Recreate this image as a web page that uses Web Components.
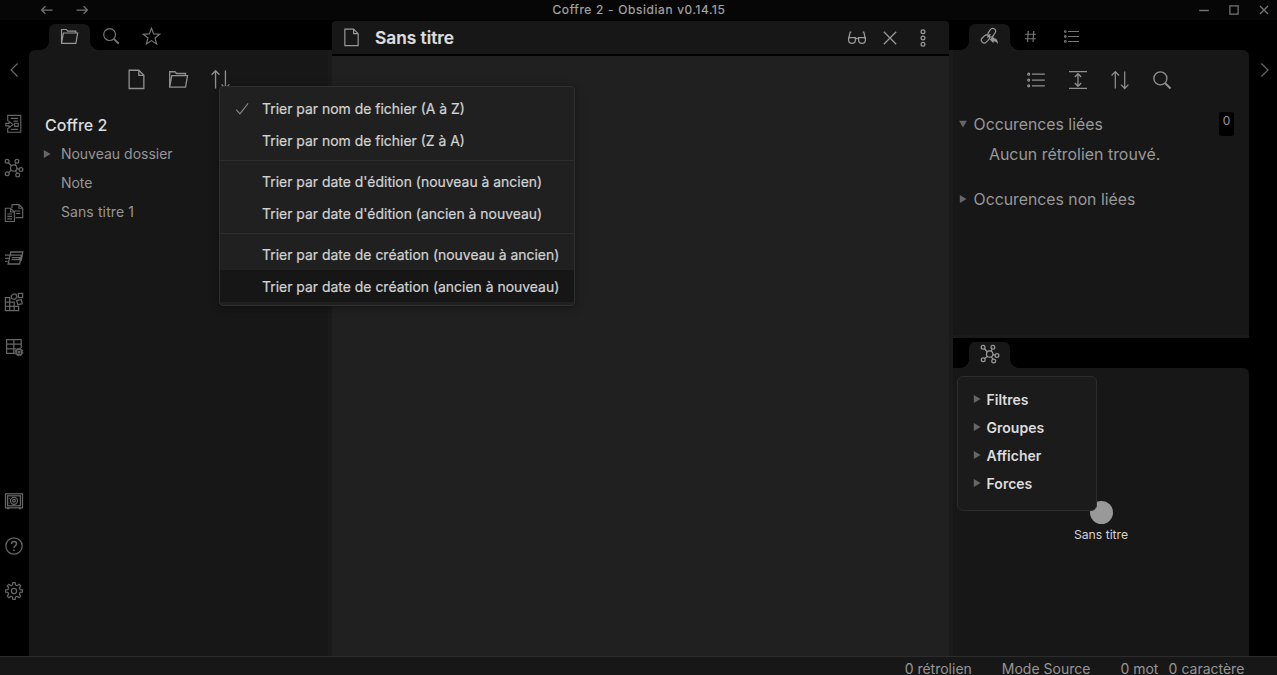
<!DOCTYPE html>
<html lang="fr">
<head>
<meta charset="utf-8">
<title>Coffre 2 - Obsidian v0.14.15</title>
<style>
html,body{margin:0;height:100%;background:#000;overflow:hidden}
body{font-family:Inter,"Liberation Sans",sans-serif;color:#dcddde}
</style>
</head>
<body>
<ob-app></ob-app>
<script>
const star = 'M10 1.3L12.3 7.3L18.6 7.6L13.7 11.6L15.4 17.8L10 14.3L4.6 17.8L6.3 11.6L1.4 7.6L7.7 7.3Z';
const gear = (cx, cy, r, R, n) => {
  const p = [];
  for (let i = 0; i < n; i++) {
    const a = i * 2 * Math.PI / n - Math.PI / 2, w = Math.PI / n;
    for (const [d, q] of [[-.62, r], [-.36, R], [.36, R], [.62, r]])
      p.push((cx + q * Math.cos(a + d * w)).toFixed(2) + ' ' + (cy + q * Math.sin(a + d * w)).toFixed(2));
  }
  return 'M' + p.join('L') + 'Z';
};
const ICONS = {
  back: '<path d="M15.5 10H5M8.4 6.2L4.6 10L8.4 13.8"/>',
  forward: '<path d="M4.5 10H15M11.6 6.2L15.4 10L11.6 13.8"/>',
  folder: '<path d="M1.6 17.3V2.6H6.6L8.1 4.3H16.6V6.2M1.6 17.3L3.6 6.3H18.6L16.7 17.3Z"/>',
  search: '<circle cx="8" cy="8" r="6.2"/><path d="M12.5 12.5L17.6 17.6" stroke-width="2"/>',
  star: `<path d="${star}"/>`,
  left: '<path d="M13.6 3.5L7 10L13.6 16.5"/>',
  right: '<path d="M6.4 3.5L13 10L6.4 16.5"/>',
  file: '<path d="M3 1.2H12.2L17 6V18.6H3ZM12.2 1.2V6H17"/>',
  sort: '<path d="M5.3 18.5V1.8M1.6 5.5L5.3 1.6L9 5.5M14.7 1.5V18.2M11 14.6L14.7 18.5L18.4 14.6"/>',
  glasses: '<path d="M4.3 4.2H3.2L1.5 11M15.7 4.2H16.8L18.5 11M8.6 10.8Q10 9.8 11.4 10.8"/><path d="M1.6 9.7H8.4V12A3.4 3.4 0 0 1 1.6 12ZM11.6 9.7H18.4V12A3.4 3.4 0 0 1 11.6 12Z"/>',
  close: '<path d="M3.8 3.8L16.2 16.2M16.2 3.8L3.8 16.2"/>',
  dots: '<circle cx="10" cy="3.7" r="1.9"/><circle cx="10" cy="10" r="1.9"/><circle cx="10" cy="16.3" r="1.9"/>',
  min: '<path d="M5.2 10.5H14.8" stroke-width="1.4"/>',
  max: '<rect x="5.9" y="5.9" width="8.2" height="8.2"/>',
  wclose: '<path d="M6 6L14 14M14 6L6 14"/>',
  links: '<rect x="-3" y="-4.8" width="6" height="9.6" rx="3" transform="translate(12.4 6) rotate(32)"/><rect x="-3" y="-4.6" width="6" height="9.2" rx="3" transform="translate(5.6 12.6) rotate(45)"/><path d="M7.6 11L11 7.6"/><path d="M10.2 13.2L14.2 9.4V11.6Q19.2 12 18.8 18.2Q17.4 15 14.2 15V17Z" fill="currentColor" stroke="none"/>',
  hash: '<path d="M7.6 4.2L6.9 15.8M13.4 4.2L12.7 15.8M4.4 7.6H15.8M4.2 12.4H15.6"/>',
  list: '<path d="M6 4.2H18.8M6 10H18.8M6 15.8H18.8"/><circle cx="2.7" cy="4.2" r="1"/><circle cx="2.7" cy="10" r="1"/><circle cx="2.7" cy="15.8" r="1"/>',
  expand: '<path d="M1 1.6H19M1 18.4H19M10 4V16M6.8 7L10 3.7L13.2 7M6.8 13L10 16.3L13.2 13"/>',
  check: '<path d="M2.6 11.4L7 16.3L16.6 4"/>',
  graph: '<circle cx="9.7" cy="10" r="3.2"/><circle cx="3.1" cy="3.3" r="1.9"/><circle cx="12.9" cy="3.2" r="1.9"/><circle cx="17" cy="11.5" r="1.9"/><circle cx="3.2" cy="15.8" r="1.9"/><circle cx="13.7" cy="17" r="1.9"/><path d="M4.4 4.7L7.4 7.7M12.1 5L11 7M15.1 11.1L12.9 10.7M4.7 14.5L7.4 12.3M12.9 15.3L11.4 12.7"/>',
  switcher: '<path d="M3.7 7V1.3H16.8V18.2H3.7V14M7 4.4H14M9.5 7.1H14M7 15.3H14M1.8 9.3H5V7.4L9 10.6L5 13.8V11.9H1.8ZM10.7 9.2H14.2V12.4H10.7Z" stroke-width="1.15"/>',
  template: '<path d="M8 5V1.6H15L18.7 5.2V14.6H11.5M15 1.6V5.2H18.7M1.3 5.2H6.6L10.4 9V18.5H1.3ZM6.6 5.2V9H10.4M3.3 11H8M3.3 13.4H8M3.3 15.8H8M10.5 8H16.3M12 10.5H16.3" stroke-width="1.15"/>',
  cards: '<path d="M4.2 16L6 7.2H17.4L15.6 16Z M6.2 6.8L6.8 4H18.8L17.2 13M7.8 9.6H15.6L15.2 11.6H7.6M1 7.2H5.3M1 10.3H4.5M1 13.4H3.6" stroke-width="1.3"/>',
  blocks: '<path d="M1.4 5.7H5.7V18.6H14.6V14.3H1.4ZM1.4 5.7V18.6H5.7M1.4 10H10.2V18.6"/><path d="M9.5 2.2H12L13 5L10.8 7.4L7.4 6.6L7.4 3.5Z" /><rect x="14.4" y="1.4" width="4.2" height="4.2"/><path d="M12.7 8.4L17.4 7.7L18.2 11.8L13.8 12.7Z"/>',
  table: '<path d="M11 16.4H2.6V2.6H17.2V11M2.6 7.2H17.2M2.6 11.8H12M9.8 2.6V16.4"/><circle cx="15" cy="15" r="3" stroke-width="1.5"/><circle cx="15" cy="15" r="3.9" stroke-dasharray="1.5 1.56" stroke-width="1"/><circle cx="15" cy="15" r="1"/>',
  vault: '<rect x="1.5" y="2.8" width="17" height="14"/><rect x="3.6" y="4.8" width="12.8" height="10"/><circle cx="10" cy="9.8" r="3.5"/><circle cx="10" cy="9.8" r="1.4"/><path d="M3 17.6H5.2M14.8 17.6H17M5.3 7V7.8M5.3 11.8V12.6"/>',
  help: '<circle cx="10" cy="10" r="8.2"/><path d="M7.5 8Q7.5 5.4 10 5.4T12.5 7.8Q12.5 9.1 11.2 9.9Q10 10.7 10 12" stroke-width="1.5"/><path d="M10 13.4V15" stroke-width="1.6"/>',
  gear: `<path d="${gear(10, 10, 6.2, 8.5, 8)}" stroke-linejoin="round"/><circle cx="10" cy="10" r="2.6"/>`
};

const define = (name, css, html) => {
  const t = document.createElement('template');
  t.innerHTML = `<style>*{box-sizing:border-box}${css}</style>${html}`;
  customElements.define(name, class extends HTMLElement {
    constructor() { super(); this.attachShadow({mode: 'open'}).append(t.content.cloneNode(true)); }
  });
};

customElements.define('ob-icon', class extends HTMLElement {
  connectedCallback() {
    if (this.shadowRoot) return;
    const s = this.getAttribute('size') || 20;
    this.attachShadow({mode: 'open'}).innerHTML =
      `<style>:host{display:block;flex:none;width:${s}px;height:${s}px}svg{display:block}</style>
       <svg width="${s}" height="${s}" viewBox="0 0 20 20" fill="none" stroke="currentColor" stroke-width="1.25">${ICONS[this.getAttribute('name')]}</svg>`;
  }
});

define('ob-caret', `:host{display:block;flex:none;width:8px;height:8px;color:#666}
  svg{display:block}:host([open]) svg{transform:rotate(90deg)}`,
  `<svg width="8" height="8" viewBox="0 0 8 8"><path d="M.8 0L7.6 4L.8 8Z" fill="currentColor"/></svg>`);

define('ob-titlebar', `:host{display:grid;grid-template-columns:1fr auto 1fr;align-items:center;height:20px;background:#060606;color:#a5a5a5;font-size:12px;line-height:20px}
  .nav{display:flex;gap:15px;padding-left:36.5px;color:#737373;margin-top:-1px}.win{display:flex;gap:10px;justify-content:flex-end;padding-right:3px;color:#777;margin-top:-1px}
  .t{letter-spacing:.64px;-webkit-text-stroke:.2px;padding-left:1px}`,
  `<div class="nav"><ob-icon name="back"></ob-icon><ob-icon name="forward"></ob-icon></div><div class="t">Coffre 2 - Obsidian v0.14.15</div>
   <div class="win"><ob-icon name="min"></ob-icon><ob-icon name="max"></ob-icon><ob-icon name="wclose"></ob-icon></div>`);

define('ob-ribbon', `:host{display:flex;flex-direction:column;align-items:center;background:#000;color:#666}
  .col{display:flex;flex-direction:column;gap:24.7px;align-items:center}
  .tog{padding-top:40px;height:93.5px}.grow{flex:1}.end{padding-bottom:55.5px}`,
  `<div class="tog"><slot name="toggle"></slot></div><div class="col"><slot></slot></div><div class="grow"></div><div class="col end"><slot name="end"></slot></div>`);

define('ob-tabs', `:host{display:flex;background:#000;height:30px;padding:4px 0 0 20px;color:#777}`, `<slot></slot>`);
define('ob-tab', `:host{display:flex;justify-content:center;width:41px;height:26px;padding-top:3px;position:relative}
  :host([active]){background:#171717;border-radius:6px 6px 0 0;color:#999}
  :host([active])::before,:host([active])::after{content:"";position:absolute;bottom:0;width:9px;height:9px}
  :host([active])::before{left:-9px;background:radial-gradient(circle at 0 0,#000 8.6px,#171717 9.2px)}
  :host([active])::after{right:-9px;background:radial-gradient(circle at 100% 0,#000 8.6px,#171717 9.2px)}`, `<slot></slot>`);

define('ob-actions', `:host{display:flex;justify-content:center;gap:21px;color:#909090}`, `<slot></slot>`);

define('ob-tree-row', `:host{display:flex;align-items:center;height:29px;padding-left:13.7px;font-size:14px;line-height:29px;color:#969696}
  .c{width:18.2px;flex:none}`, `<div class="c"><slot name="caret"></slot></div><span><slot></slot></span>`);

define('ob-left', `:host{display:flex;flex-direction:column;background:#000}
  .panel{flex:1;background:#171717;border-radius:6px 0 0 0;border-right:4px solid #1a1a1a;padding-top:19px}
  h1{margin:25px 0 0 16px;font-size:16px;font-weight:500;line-height:20px;height:24px;color:#dcddde}`,
  `<ob-tabs><ob-tab active><ob-icon name="folder" size="19"></ob-icon></ob-tab><ob-tab><ob-icon name="search" size="19" style="margin-left:1px"></ob-icon></ob-tab><ob-tab><ob-icon name="star" size="19"></ob-icon></ob-tab></ob-tabs>
  <div class="panel"><ob-actions><ob-icon name="file" size="21"></ob-icon><ob-icon name="folder" size="21"></ob-icon><ob-icon name="sort" size="21"></ob-icon></ob-actions>
  <h1>Coffre 2</h1>
  <ob-tree-row><ob-caret slot="caret"></ob-caret>Nouveau dossier</ob-tree-row><ob-tree-row>Note</ob-tree-row><ob-tree-row style="letter-spacing:.12px">Sans titre 1</ob-tree-row></div>`);

define('ob-editor', `:host{display:flex;flex-direction:column;background:#000;padding-top:1px}
  header{display:flex;align-items:center;height:33px;background:#171717;border-radius:4px 4px 0 0;padding:0 16px 0 10px;color:#999}
  h2{margin:0 0 0 14px;flex:1;font-size:17.3px;font-weight:600;-webkit-text-stroke:.2px;line-height:33px;color:#dcddde}
  .a{display:flex;gap:13px}.body{flex:1;margin-top:2px;background:#202020}`,
  `<header><ob-icon name="file" size="19"></ob-icon><h2>Sans titre</h2><div class="a"><ob-icon name="glasses"></ob-icon><ob-icon name="close"></ob-icon><ob-icon name="dots"></ob-icon></div></header><div class="body"></div>`);

define('ob-backlinks', `:host{display:block;height:288px;background:#171717;border-radius:0 6px 0 0;border-left:4px solid #1b1b1b;border-bottom:3px solid #1a1a1a;padding-top:19.5px;color:#999;font-size:15.8px}
  ob-actions{gap:22px;padding-right:3px}
  .row{display:flex;align-items:center;height:30px;padding:0 15px 0 6px}
  .row span{margin-left:6.6px;flex:1}.n{width:15px;height:24px;border-radius:3px;background:#000;text-align:center;font-size:12px;line-height:17px}
  .first{margin-top:18.5px}.empty{padding-left:36px;font-size:15.9px;line-height:31px;height:45px}`,
  `<ob-actions><ob-icon name="list"></ob-icon><ob-icon name="expand"></ob-icon><ob-icon name="sort"></ob-icon><ob-icon name="search" size="21"></ob-icon></ob-actions>
  <div class="row first"><ob-caret open></ob-caret><span>Occurences liées</span><div class="n">0</div></div><div class="empty">Aucun rétrolien trouvé.</div>
  <div class="row"><ob-caret></ob-caret><span>Occurences non liées</span></div>`);

define('ob-graph', `:host{display:block;flex:1;position:relative;background:#171717;border-radius:0 6px 0 0}
  .ctl{position:absolute;left:4px;top:8px;width:140px;height:134.5px;padding:8px 0 0 15px;border:1px solid #2d2d2d;border-radius:6px;background:#1b1b1b;font-size:14px;font-weight:600;color:#dcddde}
  .ctl div{display:flex;align-items:center;gap:5.6px;height:28px}
  .node{position:absolute;left:108px;top:132.5px;width:80px;display:flex;flex-direction:column;align-items:center;font-size:12.2px;line-height:16px;color:#d4d4d4}
  .node i{width:23px;height:23px;border-radius:50%;background:#999;margin-bottom:3px}`,
  `<div class="node"><i></i>Sans titre</div><div class="ctl"><div><ob-caret></ob-caret>Filtres</div><div><ob-caret></ob-caret>Groupes</div><div><ob-caret></ob-caret>Afficher</div><div><ob-caret></ob-caret>Forces</div></div>`);

define('ob-right', `:host{display:flex;flex-direction:column;background:#000}
  .low{flex:1;display:flex;flex-direction:column;border-left:4px solid #1b1b1b}.low ob-tabs{padding-left:16px}.low ob-tab{padding-top:2px}`,
  `<ob-tabs><ob-tab active><ob-icon name="links" size="19"></ob-icon></ob-tab><ob-tab><ob-icon name="hash" size="19"></ob-icon></ob-tab><ob-tab><ob-icon name="list" size="17" style="margin-top:1px"></ob-icon></ob-tab></ob-tabs><ob-backlinks></ob-backlinks>
  <div class="low"><ob-tabs><ob-tab active><ob-icon name="graph"></ob-icon></ob-tab></ob-tabs><ob-graph></ob-graph></div>`);

define('ob-status', `:host{display:flex;justify-content:flex-end;height:19px;border-top:1px solid #2d2d2d;background:#171717;color:#969696;font-size:14px;line-height:12px;padding:6px 32.7px 0 0}
  span{margin-left:30px}span.s{margin-left:10.2px}`,
  `<span>0 rétrolien</span><span>Mode Source</span><span>0 mot</span><span class="s">0 caractère</span>`);

define('ob-menu-item', `:host{display:flex;align-items:center;height:32px;padding:2px 0 0 14px;font-size:13.94px;line-height:30px;color:#d2d3d4;-webkit-text-stroke:.2px;white-space:nowrap}
  :host([hover]){background:#161616}.i{width:28px;flex:none;color:#888}`, `<div class="i"><slot name="icon"></slot></div><span><slot></slot></span>`);
define('ob-menu', `:host{display:block;position:absolute;left:219px;top:86px;width:356px;height:220px;border:1px solid #2f2f2f;border-radius:4px;background:#202020;padding-top:4.5px;box-shadow:0 2px 8px rgba(0,0,0,.35)}
  ::slotted(hr){margin:4px 0 4.3px;border:0;border-top:1px solid #2d2d2d}`, `<slot></slot>`);

define('ob-app', `:host{display:flex;flex-direction:column;width:1277px;height:675px;position:relative;background:#000}
  main{flex:1;display:grid;grid-template-columns:29px 303px 617px 300px 28px;min-height:0}
  .l{width:28px}.r{padding-left:3px}`,
  `<ob-titlebar></ob-titlebar>
  <main>
    <ob-ribbon class="l"><ob-icon slot="toggle" name="left"></ob-icon>
      <ob-icon name="switcher"></ob-icon><ob-icon name="graph"></ob-icon><ob-icon name="template"></ob-icon><ob-icon name="cards"></ob-icon><ob-icon name="blocks"></ob-icon><ob-icon name="table"></ob-icon>
      <ob-icon slot="end" name="vault"></ob-icon><ob-icon slot="end" name="help"></ob-icon><ob-icon slot="end" name="gear"></ob-icon></ob-ribbon>
    <ob-left></ob-left><ob-editor></ob-editor><ob-right></ob-right>
    <ob-ribbon class="r"><ob-icon slot="toggle" name="right"></ob-icon></ob-ribbon>
  </main>
  <ob-status></ob-status>
  <ob-menu>
    <ob-menu-item><ob-icon slot="icon" name="check" size="17"></ob-icon>Trier par nom de fichier (A à Z)</ob-menu-item><ob-menu-item>Trier par nom de fichier (Z à A)</ob-menu-item><hr>
    <ob-menu-item>Trier par date d'édition (nouveau à ancien)</ob-menu-item><ob-menu-item>Trier par date d'édition (ancien à nouveau)</ob-menu-item><hr>
    <ob-menu-item>Trier par date de création (nouveau à ancien)</ob-menu-item><ob-menu-item hover>Trier par date de création (ancien à nouveau)</ob-menu-item>
  </ob-menu>`);
</script>
</body>
</html>
